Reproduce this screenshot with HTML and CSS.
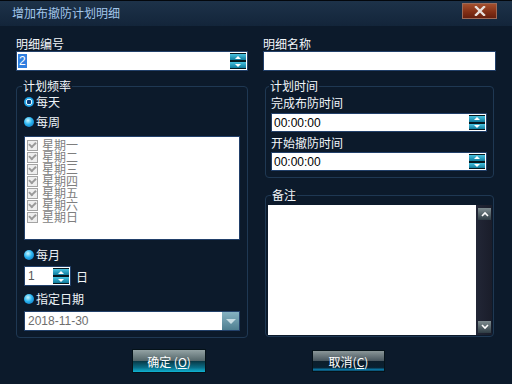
FILE: index.html
```html
<!DOCTYPE html>
<html lang="zh-CN">
<head>
    <meta charset="UTF-8">
    <title>增加布撤防计划明细</title>
    <link rel="stylesheet" href="styles.css">
</head>
<body>
    <div class="window">
        <!-- Title bar -->
        <div class="titlebar">
            <span class="title">增加布撤防计划明细</span>
            <div class="close">
                <svg width="12" height="10" viewBox="0 0 12 10">
                    <path d="M2 1 L10 9 M10 1 L2 9" stroke="#e8e0dc" stroke-width="2.4" stroke-linecap="square"/>
                </svg>
            </div>
        </div>

        <div class="content">
            <!-- Left column -->
            <div class="col">
                <div class="label">明细编号</div>
                <div class="input">
                    <span class="sel">2</span>
                    <div class="spin"><span class="up"></span><span class="down"></span></div>
                </div>

                <fieldset class="group freq">
                    <legend>计划频率</legend>
                    <div class="opt first"><span class="radio on"></span>每天</div>
                    <div class="opt week"><span class="radio"></span>每周</div>
                    <div class="list">
                        <div class="item"><span class="check"></span>星期一</div>
                        <div class="item"><span class="check"></span>星期二</div>
                        <div class="item"><span class="check"></span>星期三</div>
                        <div class="item"><span class="check"></span>星期四</div>
                        <div class="item"><span class="check"></span>星期五</div>
                        <div class="item"><span class="check"></span>星期六</div>
                        <div class="item"><span class="check"></span>星期日</div>
                    </div>
                    <div class="opt month"><span class="radio"></span>每月</div>
                    <div class="day-row">
                        <div class="input small">
                            <span class="num">1</span>
                            <div class="spin"><span class="up"></span><span class="down"></span></div>
                        </div>
                        <span class="unit">日</span>
                    </div>
                    <div class="opt date"><span class="radio"></span>指定日期</div>
                    <div class="input combo">
                        <span class="muted">2018-11-30</span>
                        <span class="drop"></span>
                    </div>
                </fieldset>
            </div>

            <!-- Right column -->
            <div class="col">
                <div class="label">明细名称</div>
                <div class="input"></div>

                <fieldset class="group time">
                    <legend>计划时间</legend>
                    <div class="label sub">完成布防时间</div>
                    <div class="input clock">
                        <span>00:00:00</span>
                        <div class="spin"><span class="up"></span><span class="down"></span></div>
                    </div>
                    <div class="label sub second">开始撤防时间</div>
                    <div class="input clock">
                        <span>00:00:00</span>
                        <div class="spin"><span class="up"></span><span class="down"></span></div>
                    </div>
                </fieldset>

                <fieldset class="group note">
                    <legend>备注</legend>
                    <div class="memo">
                        <div class="memo-text"></div>
                        <div class="scrollbar">
                            <span class="arrow">
                                <svg width="8" height="6" viewBox="0 0 8 6"><path d="M1 5 L4 2 L7 5" stroke="#fff" stroke-width="1.6" fill="none"/></svg>
                            </span>
                            <span class="arrow">
                                <svg width="8" height="6" viewBox="0 0 8 6"><path d="M1 1 L4 4 L7 1" stroke="#fff" stroke-width="1.6" fill="none"/></svg>
                            </span>
                        </div>
                    </div>
                </fieldset>
            </div>
        </div>

        <!-- Buttons -->
        <div class="footer">
            <div class="btn ok">确定 (<u>O</u>)</div>
            <div class="btn cancel">取消(<u>C</u>)</div>
        </div>
    </div>
</body>
</html>
```

FILE: styles.css
```css
* {
    margin: 0;
    padding: 0;
    box-sizing: border-box;
}

body {
    width: 512px;
    height: 384px;
    overflow: hidden;
    background: #0c1a2b;
    font-family: 'Noto Sans CJK SC', 'Liberation Sans', sans-serif;
    font-size: 12px;
    color: #eef3f8;
}

.window {
    width: 512px;
    height: 384px;
    display: flex;
    flex-direction: column;
    background: #0c1a2b;
}

/* Title bar */
.titlebar {
    height: 26px;
    border-top: 1px solid #03070c;
    background: linear-gradient(#1d3249, #13253a);
    display: flex;
    justify-content: space-between;
    align-items: flex-start;
    padding: 0 15px 0 12px;
}

.title {
    line-height: 24px;
    color: #a2c6ea;
    font-size: 12px;
}

.close {
    margin-top: 2px;
    width: 35px;
    height: 16px;
    border: 1px solid #9c6a58;
    background: linear-gradient(#a4502e, #843016 55%, #661f0e);
    display: flex;
    align-items: center;
    justify-content: center;
}

/* Columns */
.content {
    display: grid;
    grid-template-columns: 232px 233px;
    column-gap: 15px;
    padding: 11px 16px 0;
}

.col {
    display: flex;
    flex-direction: column;
}

.label {
    line-height: 14px;
    height: 14px;
    color: #f2f6fa;
}

.input {
    height: 20px;
    background: #fff;
    border: 1px solid #22406a;
    display: flex;
    align-items: center;
    justify-content: space-between;
    padding: 0 1px 0 1px;
    color: #000;
    font-family: 'Liberation Sans', sans-serif;
}

.sel {
    background: #2f7fe0;
    color: #fff;
    padding: 0 1px;
    line-height: 14px;
}

/* Spin buttons */
.spin {
    width: 16px;
    height: 16px;
    background: #051820;
    padding: 1px 0;
    display: flex;
    flex-direction: column;
    gap: 2px;
}

.spin span {
    flex: 1;
    background: linear-gradient(#48c2e0, #0e7a9c);
    display: flex;
    align-items: center;
    justify-content: center;
}

.spin .up::before {
    content: '';
    border: 3px solid transparent;
    border-top: 0;
    border-bottom: 3px solid #fff;
}

.spin .down::before {
    content: '';
    border: 3px solid transparent;
    border-bottom: 0;
    border-top: 3px solid #fff;
}

/* Group boxes */
.group {
    border: 1px solid #1f3853;
    border-radius: 4px;
    min-width: 0;
}

.group legend {
    line-height: 14px;
    padding: 0 1px;
    margin-left: -2px;
    color: #f2f6fa;
}

.freq {
    margin-top: 8px;
    padding: 0 7px 6px;
}

.opt {
    display: flex;
    align-items: center;
    gap: 2px;
    line-height: 16px;
    height: 16px;
}

.opt.first { margin-top: 1px; }
.opt.week { margin-top: 4px; }
.opt.month { margin-top: 7px; }
.opt.date { margin-top: 5px; }

.radio {
    width: 10px;
    height: 10px;
    border-radius: 50%;
    background: radial-gradient(circle at 40% 35%, #c8f6ff, #29b4f0 45%, #0a62b0);
}

.radio.on {
    background: radial-gradient(circle, #0b3a78 0 2px, #d6f3ff 2.5px 3px, #2ab0ee 3.5px, #0a62b0);
}

/* Weekday list */
.list {
    margin-top: 6px;
    height: 104px;
    background: #fff;
    border: 1px solid #22406a;
    padding: 2px 0 0 2px;
}

.item {
    display: flex;
    align-items: center;
    gap: 4px;
    height: 12px;
    line-height: 12px;
    color: #7e7e7e;
}

.check {
    width: 11px;
    height: 11px;
    border: 1px solid #a4a4a4;
    background: #eeeeee;
    display: flex;
    align-items: center;
    justify-content: center;
}

.check::before {
    content: '';
    width: 5px;
    height: 3px;
    border-left: 2px solid #9a9a9a;
    border-bottom: 2px solid #9a9a9a;
    transform: rotate(-45deg) translate(1px, -1px);
}

.day-row {
    margin-top: 3px;
    display: flex;
    align-items: center;
    gap: 5px;
}

.input.small {
    width: 47px;
}

.num {
    padding-left: 2px;
    color: #555;
}

.unit {
    color: #f2f6fa;
}

.input.combo {
    margin-top: 4px;
    padding-right: 0;
}

.muted {
    padding-left: 2px;
    color: #6e6e6e;
}

.drop {
    width: 17px;
    height: 18px;
    background: linear-gradient(#86b2c2, #4e7e90);
    display: flex;
    align-items: center;
    justify-content: center;
}

.drop::before {
    content: '';
    border: 5px solid transparent;
    border-bottom: 0;
    border-top: 5px solid #c8dde4;
}

/* Right column groups */
.time {
    margin: 8px 2px 0;
    padding: 2px 6px 6px 5px;
}

.label.sub {
    line-height: 16px;
    height: 16px;
    margin-bottom: 2px;
}

.label.second {
    margin-top: 3px;
    margin-bottom: 1px;
}

.input.clock {
    height: 19px;
    padding: 0 1px 0 2px;
}

.input.clock .spin {
    height: 15px;
}

.note {
    margin: 10px 2px 0;
    padding: 3px 1px 1px 2px;
}

.note legend {
    margin-left: 3px;
}

.memo {
    height: 130px;
    display: flex;
}

.memo-text {
    flex: 1;
    background: #fff;
}

.scrollbar {
    width: 16px;
    background: linear-gradient(to right, #222636, #1a1d2a);
    display: flex;
    flex-direction: column;
    justify-content: space-between;
    padding: 3px 1px 2px 2px;
}

.arrow {
    height: 12px;
    background: linear-gradient(#7e8c90, #2e3c44);
    display: flex;
    align-items: center;
    justify-content: center;
}

/* Footer buttons */
.footer {
    display: flex;
    align-items: center;
    gap: 106px;
    padding-left: 132px;
    margin-top: 11px;
}

.btn {
    width: 74px;
    height: 24px;
    display: flex;
    align-items: center;
    justify-content: center;
    color: #fff;
    font-size: 12px;
    border: 1px solid #051219;
}

.btn u {
    text-decoration: underline;
}

.btn.ok {
    background: linear-gradient(#93a2a4, #56686c 48%, #083744 50%, #0a6f88 80%, #10b4d4);
}

.btn.cancel {
    width: 73px;
    height: 22px;
    background: linear-gradient(#8a9698, #4a5860 48%, #0c1e2c 50%, #0a2030 82%, #0a86b8 95%, #0c2a40);
}
```
